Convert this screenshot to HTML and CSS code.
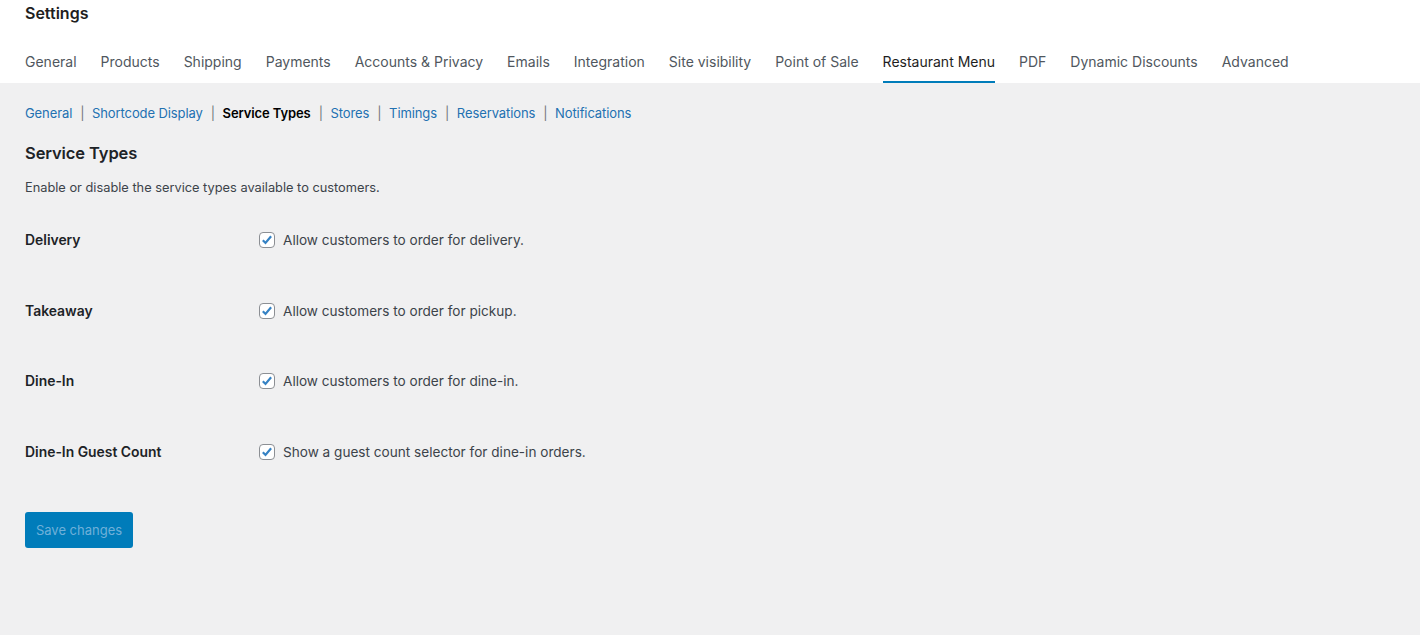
FILE: index.html
```html
<!DOCTYPE html>
<html lang="en">
<head>
  <title>Settings</title>
  <meta charset="UTF-8"/>
  <meta name="viewport" content="width=device-width,initial-scale=1"/>
  <link rel="stylesheet" href="styles.css">
</head>
<body>
<div id="header">
  <h1>Settings</h1>
  <nav class="tabs">
    <a>General</a>
    <a>Products</a>
    <a>Shipping</a>
    <a>Payments</a>
    <a>Accounts &amp; Privacy</a>
    <a>Emails</a>
    <a>Integration</a>
    <a>Site visibility</a>
    <a>Point of Sale</a>
    <a class="active">Restaurant Menu</a>
    <a>PDF</a>
    <a>Dynamic Discounts</a>
    <a>Advanced</a>
  </nav>
</div>

<div id="content">
  <ul class="subnav">
    <li><a>General</a></li>
    <li><a>Shortcode Display</a></li>
    <li><a class="current">Service Types</a></li>
    <li><a>Stores</a></li>
    <li><a>Timings</a></li>
    <li><a>Reservations</a></li>
    <li><a>Notifications</a></li>
  </ul>

  <h2>Service Types</h2>
  <p class="intro">Enable or disable the service types available to customers.</p>

  <form id="form">
    <div class="field">
      <span class="field-label">Delivery</span>
      <label class="check"><span class="box"><svg viewBox="0 0 16 16"><path d="M3.2 8.2l3.1 3.2 6.4-7.6"/></svg></span>Allow customers to order for delivery.</label>
    </div>
    <div class="field">
      <span class="field-label">Takeaway</span>
      <label class="check"><span class="box"><svg viewBox="0 0 16 16"><path d="M3.2 8.2l3.1 3.2 6.4-7.6"/></svg></span>Allow customers to order for pickup.</label>
    </div>
    <div class="field">
      <span class="field-label">Dine-In</span>
      <label class="check"><span class="box"><svg viewBox="0 0 16 16"><path d="M3.2 8.2l3.1 3.2 6.4-7.6"/></svg></span>Allow customers to order for dine-in.</label>
    </div>
    <div class="field">
      <span class="field-label">Dine-In Guest Count</span>
      <label class="check"><span class="box"><svg viewBox="0 0 16 16"><path d="M3.2 8.2l3.1 3.2 6.4-7.6"/></svg></span>Show a guest count selector for dine-in orders.</label>
    </div>

    <button type="button" class="save" disabled>Save changes</button>
  </form>
</div>
</body>
</html>
```

FILE: styles.css
```css
body {
  margin: 0;
  height: 635px;
  font-family: Inter, "Noto Sans", Arial, sans-serif;
  background: #f0f0f1;
  color: #1d2327;
}

#header {
  background: #fff;
  padding: 0 25px;
}

h1 {
  margin: 0;
  padding-top: 4px;
  font-size: 16px;
  font-weight: 600;
  line-height: 18px;
  color: #1e1e1e;
}

.tabs {
  display: flex;
  gap: 24px;
  margin-top: 20px;
}

.tabs a {
  font-size: 14px;
  line-height: 20px;
  padding: 10px 0 9px;
  color: #50575e;
  border-bottom: 2px solid transparent;
}

.tabs a.active {
  color: #1e1e1e;
  border-bottom-color: #007cba;
}

#content {
  padding: 0 25px;
}

.subnav {
  display: flex;
  list-style: none;
  margin: 0;
  padding: 21px 0 0;
  font-size: 13px;
  line-height: 18px;
}

.subnav li + li::before {
  content: "|";
  color: #72777c;
  margin: 0 7.5px 0 8px;
}

.subnav a {
  color: #2271b1;
  letter-spacing: -0.1px;
}

.subnav a.current {
  color: #000;
  font-weight: 600;
}

h2 {
  margin: 20px 0 0;
  font-size: 16.5px;
  line-height: 22px;
  font-weight: 600;
  color: #1d2327;
  letter-spacing: -0.1px;
}

.intro {
  margin: 15px 0 0;
  font-size: 12.8px;
  line-height: 18px;
  color: #3c434a;
}

#form {
  margin-top: 33px;
}

.field {
  display: flex;
  align-items: center;
  height: 20px;
  margin-bottom: 50.5px;
}

.field-label {
  width: 234px;
  font-size: 13.9px;
  font-weight: 600;
  color: #1d2327;
}

.check {
  display: flex;
  align-items: center;
  font-size: 13.6px;
  color: #3c434a;
}

.box {
  width: 14px;
  height: 14px;
  margin-right: 8px;
  background: #fff;
  border: 1px solid #8c8f94;
  border-radius: 4px;
  display: flex;
}

.box svg {
  width: 14px;
  height: 14px;
  fill: none;
  stroke: #3582c4;
  stroke-width: 2.5;
}

.save {
  display: block;
  margin-top: 10px;
  width: 108px;
  height: 36px;
  font-family: inherit;
  font-size: 13px;
  color: #6fb0d9;
  background: #007cba;
  border: none;
  border-radius: 3px;
}
```
